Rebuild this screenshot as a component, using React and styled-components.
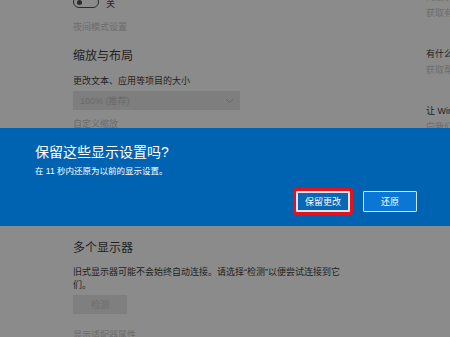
import React from 'react';
import styled, { createGlobalStyle } from 'styled-components';

const GlobalStyle = createGlobalStyle`
  html, body {
    margin: 0;
    padding: 0;
    background: #8b8b8b;
  }
  body {
    font-family: "Liberation Sans", "Noto Sans CJK SC", sans-serif;
  }
`;

const Screen = styled.div`
  position: relative;
  width: 450px;
  height: 337px;
  overflow: hidden;
  display: flex;
  align-items: flex-start;
  padding-left: 73px;
  box-sizing: border-box;
  background: #8b8b8b;
`;

const Main = styled.div`
  width: 353px;
  flex-shrink: 0;
  display: flex;
  flex-direction: column;
  align-items: flex-start;
  margin-top: -4px;

  & > * {
    flex-shrink: 0;
  }
`;

const ToggleRow = styled.div`
  display: flex;
  align-items: center;
  height: 12px;
`;

const Toggle = styled.div`
  width: 26px;
  height: 12px;
  box-sizing: border-box;
  border: 1.5px solid #2a2a2a;
  border-radius: 6px;
  display: flex;
  align-items: center;
  padding-left: 2.5px;

  &::before {
    content: '';
    width: 5px;
    height: 5px;
    border-radius: 50%;
    background: #2a2a2a;
  }
`;

const ToggleLabel = styled.span`
  margin-left: 7px;
  padding-top: 3px;
  font-size: 9px;
  line-height: 12px;
  color: #2a2a2a;
`;

const Text = styled.div`
  font-size: 9px;
  line-height: ${p => p.$lh || 12}px;
  margin-top: ${p => p.$mt || 0}px;
  color: ${p => (p.$dim ? '#6c6c6c' : '#1f1f1f')};
  max-width: ${p => (p.$wrap ? '272px' : 'none')};
  white-space: ${p => (p.$wrap ? 'normal' : 'nowrap')};
`;

const Heading = styled.div`
  font-size: 12px;
  line-height: 16px;
  margin-top: ${p => p.$mt || 0}px;
  color: #1f1f1f;
  white-space: nowrap;
`;

const Select = styled.div`
  margin-top: ${p => p.$mt || 4}px;
  width: 167px;
  height: 19px;
  box-sizing: border-box;
  background: #7e7e7e;
  display: flex;
  align-items: center;
  justify-content: space-between;
  padding: 0 6px 0 7px;
  font-size: 9px;
  color: #696969;
`;

const GrayButton = styled.div`
  margin-top: 4px;
  width: 54px;
  height: 19px;
  background: #7f7f7f;
  display: flex;
  align-items: center;
  justify-content: center;
  font-size: 9px;
  color: #6c6c6c;
`;

const Aside = styled.div`
  flex: 1;
  min-width: 0;
  overflow: hidden;
  margin-top: -9px;
  display: flex;
  flex-direction: column;
`;

const HelpGroup = styled.div`
  display: flex;
  flex-direction: column;
  gap: 4px;
  margin-bottom: 29px;
`;

const Modal = styled.div`
  position: absolute;
  top: 128px;
  left: 0;
  right: 0;
  height: 98px;
  box-sizing: border-box;
  background: #0063b1;
  padding: 14.5px 33px 14px 35px;
  display: flex;
  flex-direction: column;
  color: #ffffff;
`;

const ModalTitle = styled.div`
  font-size: 14px;
  line-height: 18px;
`;

const ModalText = styled.div`
  margin-top: 4.5px;
  font-size: 8.5px;
  line-height: 12px;
`;

const Actions = styled.div`
  margin-top: auto;
  display: flex;
  justify-content: flex-end;
  align-items: center;
  gap: 13px;
`;

const ModalButton = styled.div`
  width: 54px;
  height: 21px;
  box-sizing: border-box;
  display: flex;
  align-items: center;
  justify-content: center;
  font-size: 9px;
  color: #ffffff;
  border-radius: 1px;
  border: ${p => (p.$focused ? '2px solid #d8e7f5' : '1px solid #d0e4f5')};
  background: ${p => (p.$focused ? '#0b66b3' : '#0b77d5')};
  box-shadow: ${p => (p.$focused ? '0 0 0 3px #e3121f' : 'none')};
`;

const Chevron = () => (
  <svg width="9" height="6" viewBox="0 0 9 6">
    <path d="M1 1l3.5 3.5L8 1" fill="none" stroke="#686868" strokeWidth="1" />
  </svg>
);

export default function App() {
  return (
    <>
      <GlobalStyle />
      <Screen>
        <Main>
          <ToggleRow>
            <Toggle />
            <ToggleLabel>关</ToggleLabel>
          </ToggleRow>
          <Text $dim $mt={13}>夜间模式设置</Text>
          <Heading $mt={15}>缩放与布局</Heading>
          <Text $mt={11}>更改文本、应用等项目的大小</Text>
          <Select>
            <span>100% (推荐)</span>
            <Chevron />
          </Select>
          <Text $dim $mt={8}>自定义缩放</Text>
          <Text $mt={14}>显示分辨率</Text>
          <Select>
            <span>1920 × 1080 (推荐)</span>
            <Chevron />
          </Select>
          <Text $mt={11}>显示方向</Text>
          <Select>
            <span>横向</span>
            <Chevron />
          </Select>
          <Heading $mt={15}>多个显示器</Heading>
          <Text $wrap $lh={12.5} $mt={10}>
            旧式显示器可能不会始终自动连接。请选择“检测”以便尝试连接到它们。
          </Text>
          <GrayButton>检测</GrayButton>
          <Text $dim $mt={15}>显示适配器属性</Text>
        </Main>
        <Aside>
          <HelpGroup>
            <Text $dim>问题解答</Text>
            <Text $dim>获取有关显示的帮助</Text>
          </HelpGroup>
          <HelpGroup>
            <Text>有什么疑问?</Text>
            <Text $dim>获取帮助</Text>
          </HelpGroup>
          <HelpGroup>
            <Text>让 Windows 变得更好</Text>
            <Text $dim>向我们提供反馈</Text>
          </HelpGroup>
        </Aside>
        <Modal>
          <ModalTitle>保留这些显示设置吗?</ModalTitle>
          <ModalText>在 11 秒内还原为以前的显示设置。</ModalText>
          <Actions>
            <ModalButton $focused>保留更改</ModalButton>
            <ModalButton>还原</ModalButton>
          </Actions>
        </Modal>
      </Screen>
    </>
  );
}
